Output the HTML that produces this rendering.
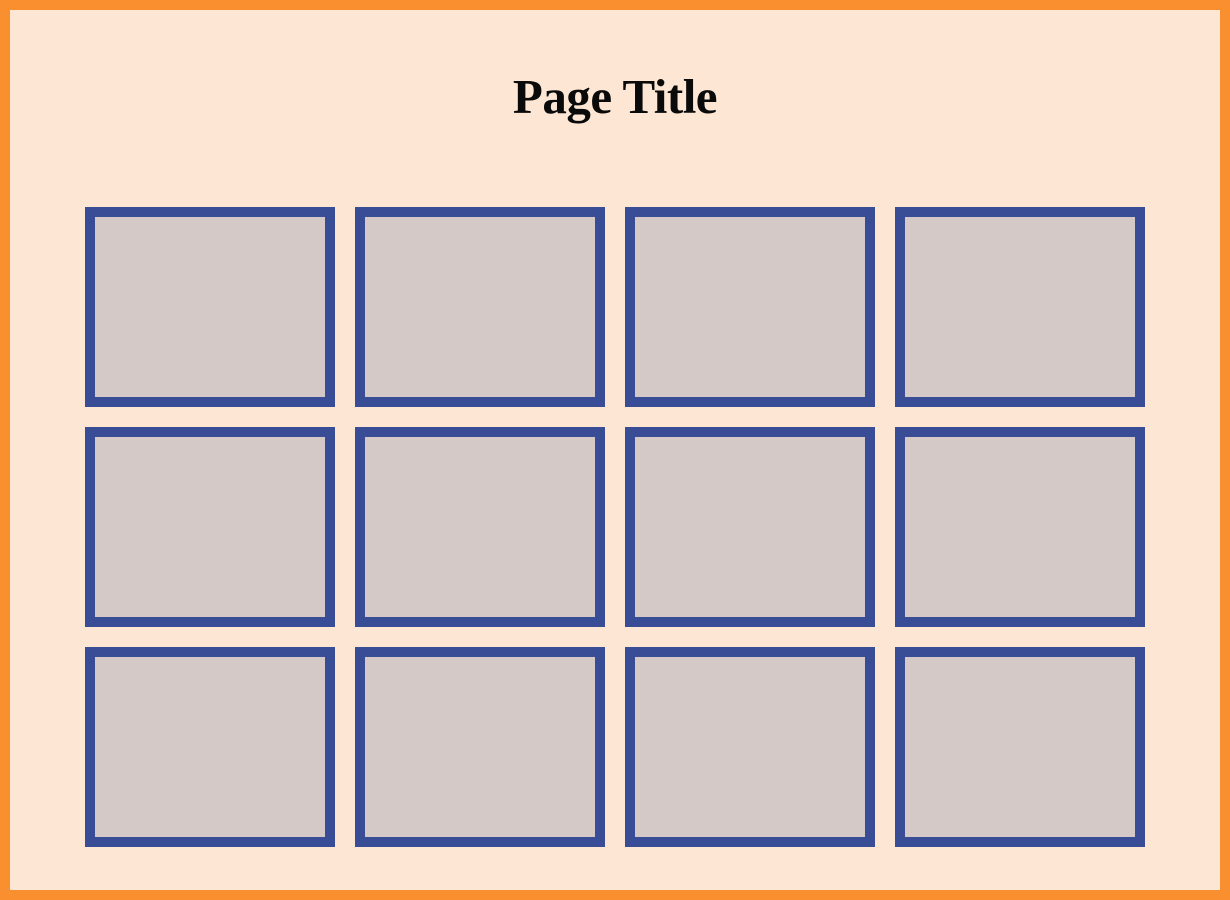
<!DOCTYPE html>
<html><head><style>
html,body{margin:0;padding:0}
body{width:1230px;height:900px;box-sizing:border-box;border:10px solid #f98f2e;background:#fde7d4;position:relative;overflow:hidden}
h1{position:absolute;left:0;right:0;top:57px;margin:0;text-align:center;font-family:"Liberation Serif",serif;font-weight:bold;font-size:49px;line-height:60px;color:#0a0a0a;letter-spacing:-0.5px}
.b{position:absolute;width:250px;height:200px;box-sizing:border-box;border:10px solid #384d96;background:#d5c9c7}
</style></head><body>
<h1>Page Title</h1>
<div class="b" style="left:75px;top:197px"></div>
<div class="b" style="left:345px;top:197px"></div>
<div class="b" style="left:615px;top:197px"></div>
<div class="b" style="left:885px;top:197px"></div>
<div class="b" style="left:75px;top:417px"></div>
<div class="b" style="left:345px;top:417px"></div>
<div class="b" style="left:615px;top:417px"></div>
<div class="b" style="left:885px;top:417px"></div>
<div class="b" style="left:75px;top:637px"></div>
<div class="b" style="left:345px;top:637px"></div>
<div class="b" style="left:615px;top:637px"></div>
<div class="b" style="left:885px;top:637px"></div>
</body></html>
